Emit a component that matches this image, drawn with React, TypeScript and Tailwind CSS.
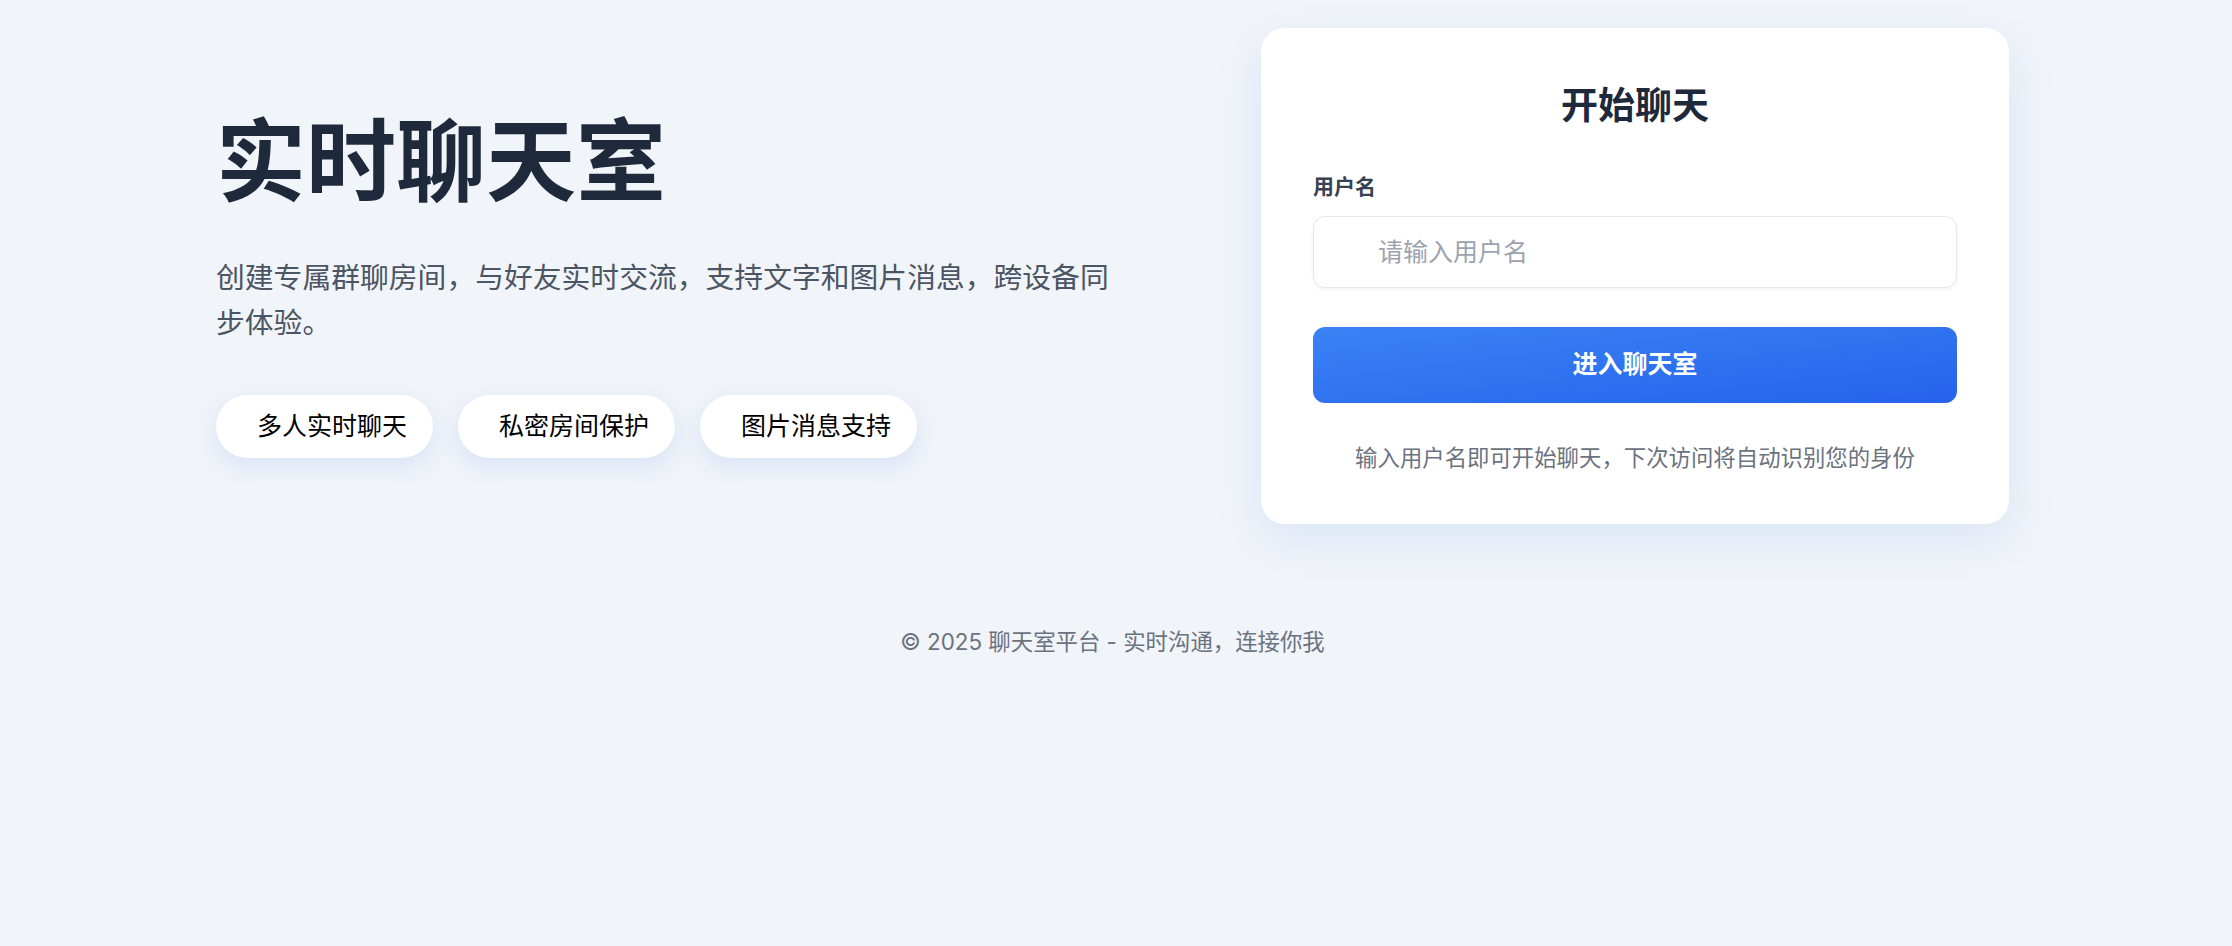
import React, { useState } from 'react';

const features = ['多人实时聊天', '私密房间保护', '图片消息支持'];

const App = () => {
    const [username, setUsername] = useState('');

    return (
        <div className="min-h-screen bg-[#f1f4f8] font-['Inter','Noto_Sans_CJK_SC',sans-serif]">
            <div className="pl-[216px] pr-[223px]">
                <div className="flex items-center justify-between pt-[28px]">
                    {/* Left intro */}
                    <div className="pt-[12px]">
                        <h1 className="text-[90px] font-bold leading-[1.25] tracking-[0px] text-[#1e293b]">
                            实时聊天室
                        </h1>
                        <p className="mt-[36px] max-w-[905px] text-[28.8px] leading-[45px] text-[#4b5563]">
                            创建专属群聊房间，与好友实时交流，支持文字和图片消息，跨设备同步体验。
                        </p>
                        <div className="mt-[50px] flex gap-[25px]">
                            {features.map((f) => (
                                <div
                                    key={f}
                                    className="flex h-[63px] items-center rounded-full bg-white pl-[41px] pr-[26px] text-[25px] text-black shadow-[0_8px_24px_rgba(59,130,246,0.14)]"
                                >
                                    {f}
                                </div>
                            ))}
                        </div>
                    </div>

                    {/* Login card */}
                    <div className="w-[748px] rounded-[24px] bg-white px-[52px] pt-[53px] pb-[50px] shadow-[0_16px_48px_rgba(59,130,246,0.12)]">
                        <h2 className="text-center text-[37px] font-bold leading-[49px] text-[#1e293b]">
                            开始聊天
                        </h2>
                        <label className="mt-[41px] block text-[21px] font-semibold leading-[31.5px] text-[#374151]">
                            用户名
                        </label>
                        <input
                            value={username}
                            onChange={(e) => setUsername(e.target.value)}
                            placeholder="请输入用户名"
                            className="mt-[13px] block h-[72px] w-full rounded-[12px] border-[1.5px] border-[#e5e7eb] bg-white pl-[64px] pr-[20px] text-[25px] text-[#1e293b] shadow-[0_2px_4px_rgba(0,0,0,0.05)] outline-none placeholder:text-[#9ca3af]"
                        />
                        <button className="mt-[39px] flex h-[76px] w-full items-center justify-center rounded-[12px] bg-linear-to-br from-[#3b82f6] to-[#2563eb] text-[25px] font-bold text-white">
                            进入聊天室
                        </button>
                        <p className="mt-[38px] text-center text-[22.4px] leading-[33.6px] text-[#6b7280]">
                            输入用户名即可开始聊天，下次访问将自动识别您的身份
                        </p>
                    </div>
                </div>

                <footer className="mt-[101px] text-center text-[22.4px] leading-[33.6px] text-[#6b7280]">
                    © 2025 聊天室平台 - 实时沟通，连接你我
                </footer>
            </div>
        </div>
    );
};

export default App;
